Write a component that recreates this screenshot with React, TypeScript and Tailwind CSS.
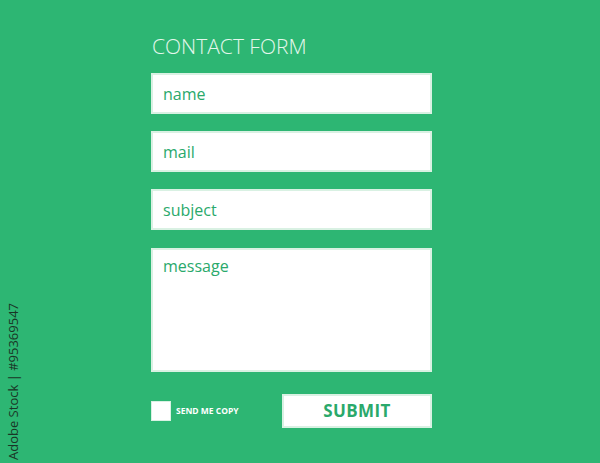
import React from 'react';

const fields = ['name', 'mail', 'subject'];

export default function App() {
  return (
    <div
      className="relative w-[600px] h-[463px] overflow-hidden bg-[#2db673]"
      style={{ fontFamily: '"Open Sans", "Noto Sans", sans-serif' }}
    >
      {/* Stock id, vertical along the left edge */}
      <div className="absolute left-[6px] bottom-[3px] origin-bottom-left -rotate-90 translate-x-[14px] whitespace-nowrap text-[13px] leading-none text-[#1a3526]">
        Adobe Stock | #95369547
      </div>

      <div className="flex flex-col pl-[151px] pt-[33px] w-[432px]">
        <h1 className="text-[21px] font-light leading-[26px] text-[#e4f6ec] pl-[1px]">
          CONTACT FORM
        </h1>

        <div className="flex flex-col gap-[17px] mt-[14px]">
          {fields.map((f) => (
            <div
              key={f}
              className="h-[41px] bg-white border-2 border-[#d9f1e3] flex items-center pl-[10px] text-[16px] text-[#2aa96b]"
            >
              {f}
            </div>
          ))}
          <div className="h-[124px] mt-[1px] bg-white border-2 border-[#d9f1e3] pl-[10px] pt-[5px] text-[16px] leading-[22px] text-[#2aa96b]">
            message
          </div>
        </div>

        <div className="flex items-center justify-between mt-[22px]">
          <label className="flex items-center gap-[5px]">
            <span className="w-[20px] h-[20px] bg-white border border-[#d9f1e3]" />
            <span className="text-[8.5px] font-bold text-white">SEND ME COPY</span>
          </label>
          <button className="w-[150px] h-[34px] bg-white border-2 border-[#d9f1e3] text-[17px] font-bold tracking-wide text-[#2aa96b]">
            SUBMIT
          </button>
        </div>
      </div>
    </div>
  );
}
